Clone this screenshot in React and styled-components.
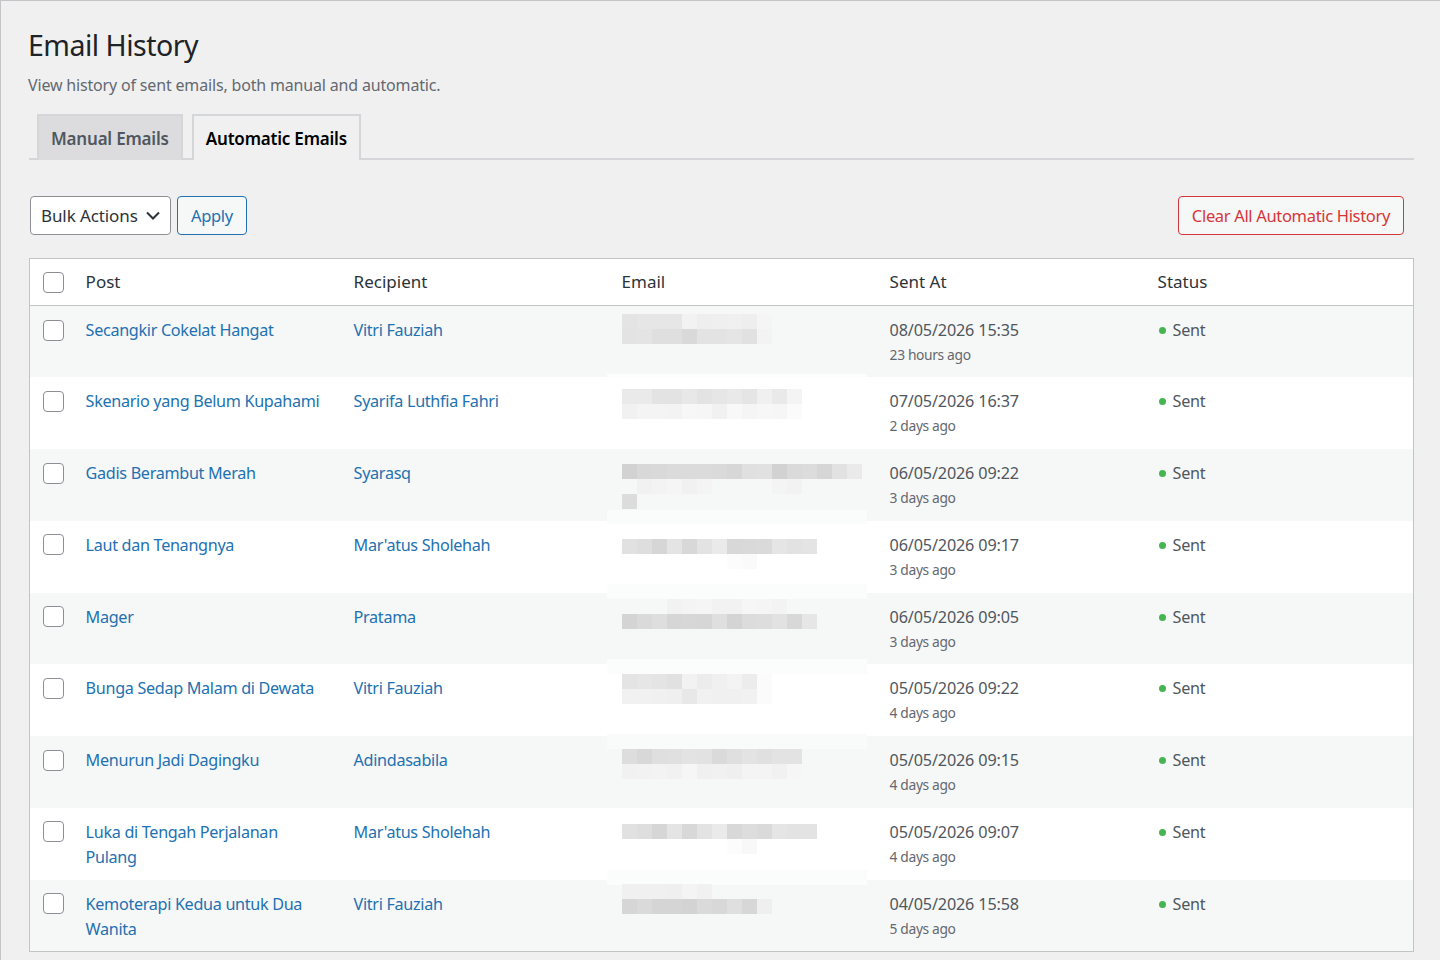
import React from 'react';
import styled, { createGlobalStyle } from 'styled-components';

const GlobalStyle = createGlobalStyle`
    html, body {
        margin: 0;
        padding: 0;
        background: #f0f0f1;
    }
    body {
        font-family: "Noto Sans", "Open Sans", sans-serif;
        color: #50575e;
    }
`

const Page = styled.div`
    box-sizing: border-box;
    width: 1440px;
    height: 960px;
    overflow: hidden;
    padding: 24px 26px 0 28px;
    border-top: 1px solid #c3c4c7;
    border-left: 1px solid #c3c4c7;
    background: #f0f0f1;
`

const Title = styled.h1`
    margin: 1px 0 0 -1px;
    font-size: 28.5px;
    line-height: 39px;
    font-weight: 400;
    color: #1d2327;
    letter-spacing: -0.5px;
`

const Subtitle = styled.p`
    margin: 8px 0 0 -1px;
    font-size: 16px;
    line-height: 24px;
    letter-spacing: -0.17px;
    color: #646970;
`

const Tabs = styled.div`
    display: flex;
    gap: 9px;
    height: 46px;
    margin-top: 17px;
    padding-left: 8px;
    border-bottom: 2px solid #d5d6d9;
    box-sizing: border-box;
`

const Tab = styled.div`
    box-sizing: border-box;
    height: 46px;
    padding: 0 12px;
    display: flex;
    align-items: center;
    font-size: 17px;
    font-weight: 600;
    letter-spacing: -0.2px;
    border: 2px solid #d5d6d9;
    border-bottom: none;
    color: ${p => (p.$active ? '#000000' : '#50575e')};
    background: ${p => (p.$active ? '#f0f0f1' : '#dcdcde')};
`

const Toolbar = styled.div`
    display: flex;
    align-items: flex-start;
    gap: 6px;
    height: 39px;
    margin-top: 36px;
    padding: 0 10px 0 1px;
`

const BulkSelect = styled.div`
    box-sizing: border-box;
    width: 141px;
    height: 38.5px;
    padding: 0 9px 0 10px;
    display: flex;
    align-items: center;
    justify-content: space-between;
    font-size: 17px;
    letter-spacing: -0.1px;
    color: #2c3338;
    background: #ffffff;
    border: 1px solid #8c8f94;
    border-radius: 4px;
`

const Button = styled.button`
    box-sizing: border-box;
    height: 38.5px;
    padding: 0 13px;
    font-family: inherit;
    font-size: 16.5px;
    letter-spacing: -0.33px;
    color: ${p => (p.$danger ? '#d63638' : '#2271b1')};
    background: #f6f7f7;
    border: 1px solid ${p => (p.$danger ? '#d63638' : '#2271b1')};
    border-radius: 4px;
    margin-left: ${p => (p.$danger ? 'auto' : '0')};
`

const TableWrap = styled.div`
    position: relative;
    margin-top: 23px;
    background: #ffffff;
    border: 1px solid #c3c4c7;
`

const Table = styled.table`
    width: 100%;
    border-collapse: collapse;
    table-layout: fixed;
`

const HeadCell = styled.th`
    height: 44px;
    padding: 0 12px 2px 0;
    text-align: left;
    font-size: 17px;
    font-weight: 400;
    color: #2c3338;
    border-bottom: 1px solid #c3c4c7;
    width: ${p => p.$width || 'auto'};
`

const Row = styled.tr`
    height: 71.75px;
    background: ${p => (p.$odd ? '#f6f7f7' : '#ffffff')};
`

const Cell = styled.td`
    padding: 12px 30px 0 0;
    vertical-align: top;
    font-size: 16.2px;
    line-height: 25px;
    letter-spacing: -0.32px;
    color: #50575e;
`

const CheckCell = styled(Cell)`
    padding: 13.5px 0 0 13px;
`

const CheckHead = styled(HeadCell)`
    height: 46px;
    padding: 0 0 0 13px;
    width: 42.6px;
`

const Box = styled.span`
    display: block;
    box-sizing: border-box;
    width: 21px;
    height: 21px;
    background: #ffffff;
    border: 1px solid #8c8f94;
    border-radius: 4px;
`

const PostLink = styled.a`
    color: #2271b1;
    text-decoration: none;
`

const SentDate = styled.div`
    letter-spacing: -0.15px;
`

const Ago = styled.div`
    font-size: 13.8px;
    line-height: 24.5px;
    letter-spacing: -0.35px;
    color: #646970;
`

const Sent = styled.span`
    display: flex;
    align-items: center;
    gap: 7px;
    padding-left: 1px;
    &::before {
        content: '';
        width: 7px;
        height: 7px;
        border-radius: 50%;
        background: #46b450;
    }
`

// pixelated block that hides the addresses, drawn over the email column
const Redaction = styled.svg`
    position: absolute;
    left: 577px;
    top: 55px;
    pointer-events: none;
`

const strips = [
    [374, 3, '#fcfdfd'],
    [510, 14, '#fafbfb'],
    [584, 15, '#fbfcfc'],
    [659, 15, '#fbfcfc'],
    [734, 15, '#f9fafa'],
    [870, 15, '#fbfcfc'],
];

const pixels = [
    [314, 'e4 e6 e6 e6 f2 ee ef f0 ee f5'],
    [329, 'e3 e4 df df d9 e3 e3 e5 e1 f3'],
    [389, 'ea ea e3 e3 e8 e3 e6 e9 e5 f0 e9 f4'],
    [404, 'f1 f4 f4 f3 f7 f6 f1 f8 f5 f7 f6 fb'],
    [464, 'd2 d8 d9 db db db da d7 e0 e1 d2 da dc d6 e2 ea'],
    [479, '-- f1 f3 f5 f1 f4 -- -- -- -- f4 f2'],
    [494, 'dc'],
    [539, 'e1 de d6 e4 d8 e3 ea d8 d9 da e5 e2 e4'],
    [554, '-- -- -- -- -- -- -- fc fa'],
    [599, '-- -- -- f2 f4 f5 f2 f2 f6 f5 f3'],
    [614, 'd4 da de d6 d7 d6 df d4 dc dd e2 d8 e6'],
    [674, 'e4 e6 e4 e1 f2 ec f0 f3 ec fb'],
    [689, 'f1 f1 f0 ef e8 f1 f0 f0 f1 fb'],
    [749, 'dd d8 df e0 e3 e2 da df e3 e0 e3 e3'],
    [764, 'f1 f2 f3 f1 f6 f0 f1 ef f4 f4 f1 f6'],
    [824, 'e1 de d6 e4 d8 e3 ea d8 dd da e5 e3 e3'],
    [839, '-- -- -- -- -- -- -- fc f8'],
    [884, 'f0 f0 f0 ef f4 f1'],
    [899, 'd6 da d5 d5 d3 da d8 df d7 ef'],
];

const rows = [
    ['Secangkir Cokelat Hangat', 'Vitri Fauziah', '08/05/2026 15:35', '23 hours ago'],
    ['Skenario yang Belum Kupahami', 'Syarifa Luthfia Fahri', '07/05/2026 16:37', '2 days ago'],
    ['Gadis Berambut Merah', 'Syarasq', '06/05/2026 09:22', '3 days ago'],
    ['Laut dan Tenangnya', "Mar'atus Sholehah", '06/05/2026 09:17', '3 days ago'],
    ['Mager', 'Pratama', '06/05/2026 09:05', '3 days ago'],
    ['Bunga Sedap Malam di Dewata', 'Vitri Fauziah', '05/05/2026 09:22', '4 days ago'],
    ['Menurun Jadi Dagingku', 'Adindasabila', '05/05/2026 09:15', '4 days ago'],
    ['Luka di Tengah Perjalanan Pulang', "Mar'atus Sholehah", '05/05/2026 09:07', '4 days ago'],
    ['Kemoterapi Kedua untuk Dua Wanita', 'Vitri Fauziah', '04/05/2026 15:58', '5 days ago'],
];

const App = function(){
    return(
    <Page>
        <GlobalStyle />
        <Title>Email History</Title>
        <Subtitle>View history of sent emails, both manual and automatic.</Subtitle>
        <Tabs>
            <Tab>Manual Emails</Tab>
            <Tab $active>Automatic Emails</Tab>
        </Tabs>
        <Toolbar>
            <BulkSelect>
                Bulk Actions
                <svg width="16" height="16" viewBox="0 0 16 16" fill="none" stroke="#2c3338" strokeWidth="2">
                    <path d="M2 5.5l6 6 6-6" />
                </svg>
            </BulkSelect>
            <Button>Apply</Button>
            <Button $danger>Clear All Automatic History</Button>
        </Toolbar>
        <TableWrap>
            <Table>
                <thead>
                    <tr>
                        <CheckHead><Box /></CheckHead>
                        <HeadCell $width="256px">Post</HeadCell>
                        <HeadCell $width="256px">Recipient</HeadCell>
                        <HeadCell $width="256px">Email</HeadCell>
                        <HeadCell $width="256px">Sent At</HeadCell>
                        <HeadCell>Status</HeadCell>
                    </tr>
                </thead>
                <tbody>
                    {rows.map((row, i) => (
                        <Row key={row[0]} $odd={i % 2 === 0}>
                            <CheckCell><Box /></CheckCell>
                            <Cell><PostLink href="#">{row[0]}</PostLink></Cell>
                            <Cell><PostLink href="#">{row[1]}</PostLink></Cell>
                            <Cell />
                            <Cell>
                                <SentDate>{row[2]}</SentDate>
                                <Ago>{row[3]}</Ago>
                            </Cell>
                            <Cell><Sent>Sent</Sent></Cell>
                        </Row>
                    ))}
                </tbody>
            </Table>
            <Redaction width="260" height="600" viewBox="607 314 260 600">
                {strips.map(([y, h, fill]) => (
                    <rect key={y} x="607" y={y} width="260" height={h} fill={fill} />
                ))}
                {pixels.map(([y, cells]) => cells.split(' ').map((c, i) => (
                    c === '--' ? null : <rect key={y + '-' + i} x={622 + i * 15} y={y} width="15" height="15" fill={'#' + c + c + c} />
                )))}
            </Redaction>
        </TableWrap>
    </Page>
    );
}

export default App;
